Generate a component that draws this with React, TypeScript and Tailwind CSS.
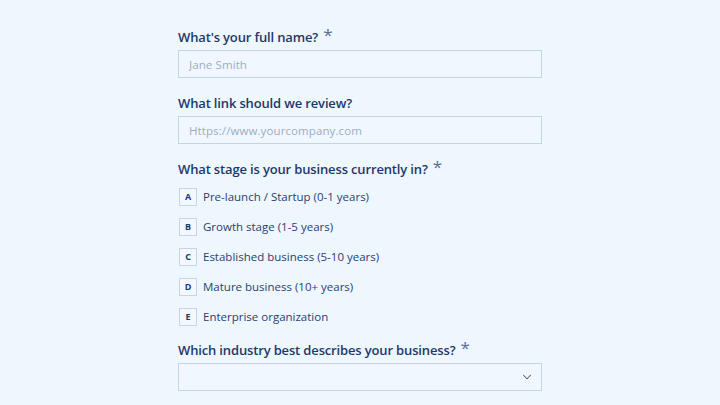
import { ChevronDown } from 'lucide-react';

const stages = [
  { key: 'A', label: 'Pre-launch / Startup (0-1 years)' },
  { key: 'B', label: 'Growth stage (1-5 years)' },
  { key: 'C', label: 'Established business (5-10 years)' },
  { key: 'D', label: 'Mature business (10+ years)' },
  { key: 'E', label: 'Enterprise organization' },
];

function Label({ text, required }: { text: string; required?: boolean }) {
  return (
    <label className="h-[18px] flex items-start gap-[5px] text-[13px] leading-[18px] font-semibold tracking-[-0.15px] text-[#1f386a]">
      {text}
      {required && <span className="text-[17px] leading-[14px] font-normal text-[#5a6f95]">*</span>}
    </label>
  );
}

const inputCls =
  'mt-[4px] h-[28px] w-full border border-[#c6d3e3] bg-[#f0f7fe] px-[10px] text-[11.5px] tracking-[0.1px] text-[#213a6b] placeholder:text-[#9dadc3] outline-none';

export default function App() {
  return (
    <div className="w-[720px] h-[405px] overflow-hidden bg-[#eef6fe] font-['Open_Sans',sans-serif]">
      <div className="w-[364px] ml-[178px] pt-[28px] flex flex-col">
        {/* Name */}
        <Label text="What's your full name?" required />
        <input type="text" placeholder="Jane Smith" className={inputCls} />

        {/* Link */}
        <div className="mt-[16px]">
          <Label text="What link should we review?" />
        </div>
        <input type="text" placeholder="Https://www.yourcompany.com" className={inputCls} />

        {/* Stage */}
        <div className="mt-[16px]">
          <Label text="What stage is your business currently in?" required />
        </div>
        <div className="mt-[10px] flex flex-col gap-[12px]">
          {stages.map((s) => (
            <div key={s.key} className="flex items-center gap-[6px]">
              <div className="ml-[1px] w-[18px] h-[18px] flex items-center justify-center border border-[#c6d3e3] bg-[#f3f8fe] text-[9px] font-bold text-[#213a6b]">
                {s.key}
              </div>
              <span className="text-[11.5px] text-[#2b416e]">{s.label}</span>
            </div>
          ))}
        </div>

        {/* Industry */}
        <div className="mt-[15px]">
          <Label text="Which industry best describes your business?" required />
        </div>
        <div className="mt-[4px] h-[28px] w-full border border-[#c6d3e3] bg-[#f0f7fe] flex items-center justify-end pr-[7px]">
          <ChevronDown size={14} strokeWidth={1.8} className="text-[#4a5f85]" />
        </div>
      </div>
    </div>
  );
}
